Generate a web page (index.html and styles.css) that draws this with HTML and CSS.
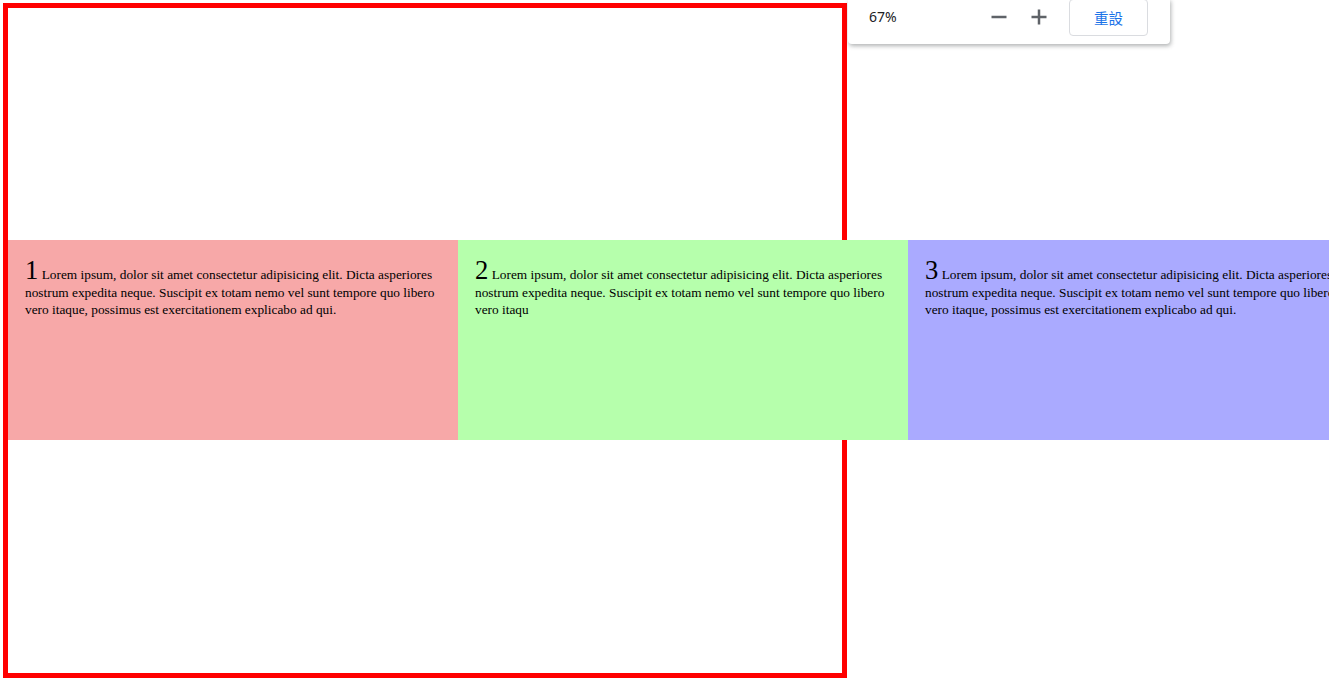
FILE: index.html
```html
<!DOCTYPE html>
<html lang="zh-Hant">
<head>
  <meta charset="UTF-8">
  <meta name="viewport" content="width=device-width, initial-scale=1">
  <title>Flex overflow</title>
  <link rel="stylesheet" href="styles.css">
</head>
<body>
  <div class="frame">
    <div class="panel panel-red">
      <p><span class="num">1</span> Lorem ipsum, dolor sit amet consectetur adipisicing elit. Dicta asperiores nostrum expedita neque. Suscipit ex totam nemo vel sunt tempore quo libero vero itaque, possimus est exercitationem explicabo ad qui.</p>
    </div>
    <div class="panel panel-green">
      <p><span class="num">2</span> Lorem ipsum, dolor sit amet consectetur adipisicing elit. Dicta asperiores nostrum expedita neque. Suscipit ex totam nemo vel sunt tempore quo libero vero itaqu</p>
    </div>
    <div class="panel panel-blue">
      <p><span class="num">3</span> Lorem ipsum, dolor sit amet consectetur adipisicing elit. Dicta asperiores nostrum expedita neque. Suscipit ex totam nemo vel sunt tempore quo libero vero itaque, possimus est exercitationem explicabo ad qui.</p>
    </div>
  </div>

  <!-- zoom bubble -->
  <div class="zoom-bubble">
    <span class="zoom-level">67%</span>
    <button class="zoom-btn" aria-label="縮小">
      <svg width="16" height="16" viewBox="0 0 16 16"><path d="M0.5 8H15.5" stroke="#5f6368" stroke-width="2.5"/></svg>
    </button>
    <button class="zoom-btn" aria-label="放大">
      <svg width="16" height="16" viewBox="0 0 16 16"><path d="M0.5 8H15.5M8 0.5V15.5" stroke="#5f6368" stroke-width="2.5"/></svg>
    </button>
    <button class="reset-btn">重設</button>
  </div>
</body>
</html>
```

FILE: styles.css
```css
html {
  overflow: hidden;
}

body {
  margin: 3px 0 0 3px;
  font-family: 'Liberation Serif', 'Times New Roman', serif;
  background: #fff;
  color: #000;
}

.frame {
  display: flex;
  align-items: center;
  width: 834px;
  height: 664px;
  padding-bottom: 1px;
  border: 5px solid #f00;
}

.panel {
  flex: 0 0 450px;
  height: 200px;
  box-sizing: border-box;
  padding: 17px;
}

.panel p {
  margin: 0;
  font-size: 13.33px;
  line-height: 17.33px;
}

.panel .num {
  font-size: 26.67px;
  line-height: 1;
}

.panel-red { background: #f7a8a8; }
.panel-green { background: #b6ffac; }
.panel-blue { background: #aaaaff; }

.zoom-bubble {
  position: absolute;
  top: -1px;
  left: 848px;
  width: 279px;
  height: 37px;
  padding: 0 22px 8px 21px;
  display: flex;
  align-items: center;
  background: #fff;
  border-radius: 0 0 4px 4px;
  box-shadow: 1px 2px 4px rgba(60, 64, 67, 0.4);
  font-family: 'Noto Sans', Roboto, sans-serif;
}

.zoom-level {
  flex: 1;
  font-size: 14px;
  color: #202124;
  margin-top: -2px;
}

.zoom-btn {
  width: 32px;
  height: 32px;
  padding: 0;
  border: none;
  background: none;
  display: flex;
  align-items: center;
  justify-content: center;
  margin-top: -2px;
}

.zoom-btn + .zoom-btn {
  margin-left: 8.5px;
}

.reset-btn {
  margin-left: 14px;
  width: 79px;
  height: 37px;
  box-sizing: border-box;
  border: 1px solid #dadce0;
  border-radius: 4px;
  background: #fff;
  color: #1a73e8;
  font-family: 'Noto Sans CJK TC', sans-serif;
  font-size: 14.5px;
  padding: 0;
}
```
